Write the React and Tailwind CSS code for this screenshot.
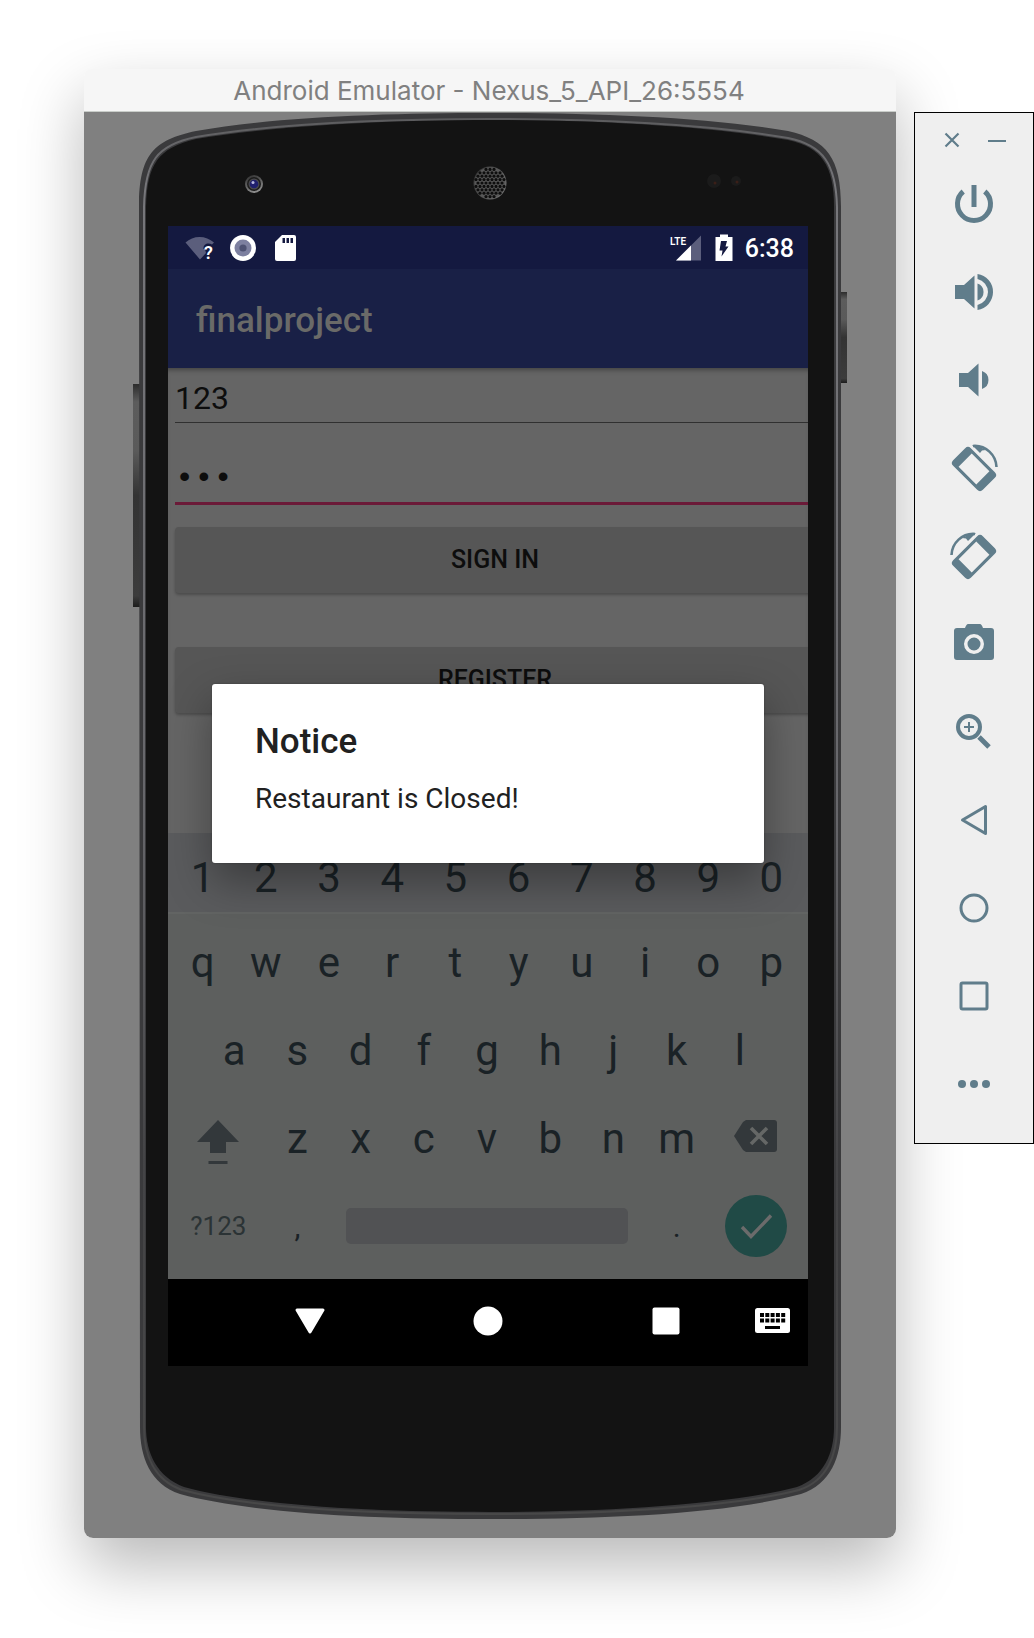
import React from "react";

const roboto = "font-['Roboto','Liberation_Sans',sans-serif]";

function PhoneFrame() {
  const holes = [];
  for (let row = -4; row <= 4; row++) {
    for (let col = -4; col <= 4; col++) {
      const x = col * 4 + (row % 2 ? 2 : 0);
      const y = row * 3.4;
      if (Math.hypot(x, y) < 14.5) holes.push([x, y]);
    }
  }
  return (
    <svg
      className="absolute inset-0 h-full w-full"
      viewBox="0 0 812 1426"
      preserveAspectRatio="none"
      aria-hidden="true"
    >
      <defs>
        <linearGradient id="sideKey" x1="0" y1="0" x2="0" y2="1">
          <stop offset="0" stopColor="#2c2c2c" />
          <stop offset="0.08" stopColor="#5c5c5c" />
          <stop offset="0.3" stopColor="#5a5a5a" />
          <stop offset="0.5" stopColor="#333" />
          <stop offset="0.95" stopColor="#3c3c3c" />
          <stop offset="1" stopColor="#1c1c1c" />
        </linearGradient>
        <linearGradient id="rim" x1="0" y1="0" x2="0" y2="1">
          <stop offset="0" stopColor="#5c5c5e" />
          <stop offset="0.05" stopColor="#77777b" />
          <stop offset="0.5" stopColor="#66666a" />
          <stop offset="0.75" stopColor="#444446" />
          <stop offset="1" stopColor="#484848" />
        </linearGradient>
        <linearGradient id="camera" x1="0" y1="0" x2="0.4" y2="1">
          <stop offset="0" stopColor="#2a2a2a" />
          <stop offset="1" stopColor="#8c8c8c" />
        </linearGradient>
        <linearGradient id="speaker" x1="0" y1="0" x2="1" y2="0.5">
          <stop offset="0" stopColor="#2e2e2e" />
          <stop offset="1" stopColor="#707070" />
        </linearGradient>
      </defs>
      <rect x="49" y="272" width="8" height="223" fill="url(#sideKey)" />
      <rect x="757" y="180" width="6" height="91" fill="url(#sideKey)" />
      <path
        d="M55 95C55 42 70 28 112 19C190 5 300 1 406 1S622 5 704 19C743 28 757 46 757 95V1315C757 1345 747 1372 717 1382C643 1402 520 1407 406 1407S170 1402 96 1382C66 1372 56 1345 56 1315Z"
        fill="#3a3a3c"
      />
      <path
        d="M60 95C61 49 73 33 112 25C190 12 300 7 406 7S622 12 704 26C739 33 752 52 753 95V1315C753 1343 743 1369 715 1378C643 1396 520 1402 406 1402S170 1397 98 1378C70 1368 60 1343 60 1315Z"
        fill="none"
        stroke="url(#rim)"
        strokeWidth="2"
      />
      <path
        d="M62 95C63 52 74 36 112 27C190 14 300 8 406 8S622 14 704 28C737 35 750 53 750 95V1315C750 1341 740 1365 713 1375C643 1393 520 1400 406 1400S170 1394 100 1375C73 1365 62 1341 62 1315Z"
        fill="#131313"
      />
      <circle cx="170" cy="72" r="9" fill="url(#camera)" />
      <circle cx="170" cy="72" r="7" fill="#1c1c1c" />
      <circle cx="170" cy="72" r="5.500" fill="#4a4a4c" />
      <circle cx="170" cy="72" r="4.300" fill="#20206e" />
      <circle cx="169" cy="70.500" r="1.500" fill="#b8b8e0" />
      <circle cx="406" cy="71" r="16.500" fill="url(#speaker)" />
      <circle cx="406" cy="71" r="15.500" fill="#585858" />
      {holes.map(([x, y]) => (
        <circle key={`${x},${y}`} cx={406 + x} cy={71 + y} r="1.600" fill="#0e0e0e" />
      ))}
      <circle cx="630" cy="69" r="7" fill="#1b1b1b" />
      <circle cx="631" cy="71" r="1.500" fill="#3a1f18" />
      <circle cx="652" cy="69" r="5" fill="#1b1b1b" />
      <circle cx="653" cy="70" r="1.500" fill="#3a1f18" />
    </svg>
  );
}

function StatusBar() {
  return (
    <div className="flex h-[43px] items-center justify-between bg-[#141940] pl-4 pr-[14px]">
      <div className="flex items-center gap-4">
        <svg className="h-[30px] w-[30px]" viewBox="0 0 30 30" role="img" aria-label="Wi-Fi without internet">
          <path d="M1.500 9.500C9 2 22 2 30 9.500L28 11.500C24 9 19 11 19.500 16H21L22 20L16 26.500Z" fill="#5b5e7c" />
          <text x="20" y="26" fill="#fff" fontSize="18" fontWeight="600">?</text>
        </svg>
        <svg className="h-[26px] w-[26px]" viewBox="0 0 26 26" role="img" aria-label="Background task">
          <circle cx="13" cy="13" r="13" fill="#fff" />
          <circle cx="13" cy="13" r="8.500" fill="#7d80a0" />
          <circle cx="13" cy="13" r="3.600" fill="#4e5273" />
        </svg>
        <svg className="h-[26px] w-[26px]" viewBox="0 0 26 26" role="img" aria-label="SD card">
          <path d="M10 0H22Q24 0 24 2V24Q24 26 22 26H5Q3 26 3 24V7Z" fill="#fff" />
          <path d="M10.500 3h2.500v5h-2.500zM14.500 3h2.500v5h-2.500zM18.500 3h2.500v5h-2.500z" fill="#141940" />
        </svg>
      </div>
      <div className="flex items-center gap-3">
        <svg className="h-[28px] w-[34px]" viewBox="0 0 34 28" role="img" aria-label="LTE signal">
          <path d="M32 1.500V26.500H7Z" fill="#5b5e7c" />
          <path d="M22 11.500V26.500H7Z" fill="#fff" />
          <text x="1" y="11" fill="#fff" fontSize="10" fontWeight="600">LTE</text>
        </svg>
        <svg className="h-[28px] w-[18px]" viewBox="0 0 18 28" role="img" aria-label="Battery charging">
          <path d="M5 .5H13V3H17.500V27H.5V3H5Z" fill="#fff" />
          <path d="M6 7H12L10.500 12.500H13.500L6.500 22.500L7.500 16.500H4.500Z" fill="#141940" />
        </svg>
        <span className="pt-[2px] text-[25px] font-medium leading-none text-white">6:38</span>
      </div>
    </div>
  );
}

function LoginForm() {
  const button =
    "-mr-[7px] ml-[7px] h-[66px] shrink-0 rounded-[4px] bg-[#565656] text-[25px] font-medium text-[#0d0d0d] shadow-[0_2px_3px_rgba(0,0,0,0.25)]";
  return (
    <form
      className="flex h-[465px] flex-col bg-[#656565] pt-[5px] shadow-[inset_0_5px_5px_-3px_rgba(0,0,0,0.35)]"
      onSubmit={(e) => e.preventDefault()}
    >
      <input
        aria-label="Username"
        type="text"
        defaultValue="123"
        className="ml-[7px] h-[50px] border-b border-[#303030] bg-transparent text-[32px] text-[#0d0d0d] outline-none"
      />
      <input
        aria-label="Password"
        type="password"
        defaultValue="123"
        className="ml-[7px] mt-8 h-[50px] border-b-[3px] border-[#6b1a38] bg-transparent font-['Liberation_Mono',monospace] text-[32px] text-[#0d0d0d] outline-none"
      />
      <div className="mt-[22px] flex flex-col gap-[54px]">
        <button type="submit" className={button}>SIGN IN</button>
        <button type="button" className={button}>REGISTER</button>
      </div>
    </form>
  );
}

function Key({ children }) {
  return (
    <button type="button" className="col-span-2 flex items-center justify-center pt-[2px] text-[42px] leading-none">
      {children}
    </button>
  );
}

function Keyboard() {
  return (
    <div className="text-[#1a2226]">
      <div className="grid h-[79px] grid-cols-[repeat(20,minmax(0,1fr))] bg-[#5a5b5d] pl-[3px] pr-[5px] pt-2">
        {"1234567890".split("").map((k) => <Key key={k}>{k}</Key>)}
      </div>
      <div className="grid grid-cols-[repeat(20,minmax(0,1fr))] auto-rows-[88px] border-t-2 border-[#626463] bg-[#5d5f5e] pb-[9px] pl-[3px] pr-[5px] pt-1">
        {"qwertyuiop".split("").map((k) => <Key key={k}>{k}</Key>)}
        <span />
        {"asdfghjkl".split("").map((k) => <Key key={k}>{k}</Key>)}
        <span />
        <button type="button" aria-label="Shift" className="col-span-3 flex items-center justify-center">
          <svg className="h-14 w-14" viewBox="-28 -28 56 56" fill="#33383b">
            <path d="M0-18L21 4H8V15H-8V4H-21Z" />
            <path d="M-9.500 23H9.500V26H-9.500Z" />
          </svg>
        </button>
        {"zxcvbnm".split("").map((k) => <Key key={k}>{k}</Key>)}
        <button type="button" aria-label="Backspace" className="col-span-3 flex items-center justify-center">
          <svg className="h-12 w-12" viewBox="-24 -24 48 48">
            <path d="M-10-18H18Q21-18 21-15V11Q21 14 18 14H-10L-13 12L-22-2L-13-16Z" fill="#33383b" />
            <path d="M-5-10L11 6M11-10L-5 6" stroke="#656766" strokeWidth="3.600" />
          </svg>
        </button>
        <button type="button" className="col-span-3 text-[26px] text-[#2b3335]">?123</button>
        <button type="button" className="col-span-2 text-[30px]">,</button>
        <button type="button" aria-label="Space" className="col-span-10 mx-[17px] h-9 self-center rounded-[5px] bg-[#515254]" />
        <button type="button" className="col-span-2 text-[30px]">.</button>
        <button type="button" aria-label="Done" className="col-span-3 flex items-center justify-center">
          <svg className="h-[62px] w-[62px]" viewBox="-31 -31 62 62">
            <circle r="31" fill="#204a46" />
            <path d="M-14 1L-5 10.500L15-10.500" fill="none" stroke="#6b6b6b" strokeWidth="3.400" />
          </svg>
        </button>
      </div>
    </div>
  );
}

function NavBar() {
  const cell = "flex flex-1 items-center justify-center";
  return (
    <div className="flex h-[87px] items-center bg-black pb-[3px] pl-[53px] pr-[18px]">
      <button type="button" aria-label="Hide keyboard" className={cell}>
        <svg className="h-8 w-8" viewBox="-16 -16 32 32">
          <path d="M-13-11H13L0 11Z" fill="#fff" stroke="#fff" strokeWidth="3" strokeLinejoin="round" />
        </svg>
      </button>
      <button type="button" aria-label="Home" className={cell}>
        <svg className="h-8 w-8" viewBox="-16 -16 32 32"><circle r="14.500" fill="#fff" /></svg>
      </button>
      <button type="button" aria-label="Overview" className={cell}>
        <svg className="h-8 w-8" viewBox="-16 -16 32 32"><rect x="-13.500" y="-13.500" width="27" height="27" rx="2" fill="#fff" /></svg>
      </button>
      <button type="button" aria-label="Switch input method">
        <svg className="h-[26px] w-[35px]" viewBox="0 0 35 26">
          <rect width="35" height="25" rx="2.500" fill="#fff" />
          {[0, 1, 2, 3, 4].map((i) => (
            <g key={i}>
              <rect x={5 + i * 5.3} y="5" width="4" height="4" />
              <rect x={5 + i * 5.3} y="10.500" width="4" height="4" />
            </g>
          ))}
          <rect x="10" y="18" width="15" height="3" />
        </svg>
      </button>
    </div>
  );
}

function NoticeDialog() {
  return (
    <div
      role="dialog"
      aria-labelledby="notice-title"
      className="absolute inset-x-11 top-[458px] h-[179px] rounded-[3px] bg-white px-[43px] pt-[37px] text-[#212121] shadow-[0_18px_44px_rgba(0,0,0,0.35),0_0_2px_rgba(0,0,0,0.3)]"
    >
      <h2 id="notice-title" className="text-[35px] font-medium leading-[42px]">Notice</h2>
      <p className="mt-4 text-[28px] leading-10">Restaurant is Closed!</p>
    </div>
  );
}

function EmulatorWindow() {
  return (
    <main className="min-w-0 flex-1 overflow-clip rounded-t-[8px] rounded-b-[9px]">
      <header className="flex h-[43px] items-center justify-center border-b border-[#c9cdc9] bg-[#f6f6f6] pr-[2px] pt-[2px]">
        <h1 className="whitespace-nowrap font-['Inter',sans-serif] text-[26px] leading-none text-[#808080]">
          Android Emulator - Nexus_5_API_26:5554
        </h1>
      </header>
      <div className="relative bg-[#808080] pb-[172px] pl-[84px] pr-[88px] pt-[114px]">
        <PhoneFrame />
        <div className={`relative overflow-hidden ${roboto}`}>
          <StatusBar />
          <div className="flex h-[99px] items-center bg-[#192046] pl-7 pt-1">
            <h2 className="text-[35px] font-medium leading-none text-[#6a6a68]">finalproject</h2>
          </div>
          <LoginForm />
          <Keyboard />
          <NavBar />
          <NoticeDialog />
        </div>
      </div>
    </main>
  );
}

const rotateDevice = (
  <>
    <path
      fillRule="evenodd"
      transform="translate(0 1) rotate(45)"
      d="M-17-12.500H17Q21-12.500 21-8.500V8.500Q21 12.500 17 12.500H-17Q-21 12.500-21 8.500V-8.500Q-21-12.500-17-12.500ZM-12.500-9.300V9.300H12.500V-9.300Z"
    />
    <path d="M-1-22C12-23 22-13 22.500-1" fill="none" stroke="currentColor" strokeWidth="2.600" />
    <path d="M-2-23L6-15L8-17.500L12-18L4-22Z" />
  </>
);

const tools = [
  {
    label: "Power",
    icon: (
      <g fill="none" stroke="currentColor" strokeWidth="5">
        <path d="M0-19V3M-10.800-12.500A16.500 16.500 0 1 0 10.800-12.500" />
      </g>
    ),
  },
  {
    label: "Volume up",
    icon: (
      <>
        <path d="M-19-7H-10L.5-16.500V16.500L-10 7H-19ZM3.500-8.500A9 9 0 0 1 3.500 8.500Z" />
        <path d="M3.500-18A18.200 18.200 0 0 1 3.500 18V13A13.300 13.300 0 0 0 3.500-13Z" />
      </>
    ),
  },
  {
    label: "Volume down",
    icon: <path d="M-15-7H-6L4.500-16.500V16.500L-6 7H-15ZM8-9A9.500 9.500 0 0 1 8 9Z" />,
  },
  { label: "Rotate left", icon: rotateDevice },
  { label: "Rotate right", icon: <g transform="scale(-1 1)">{rotateDevice}</g> },
  {
    label: "Take screenshot",
    icon: (
      <path
        fillRule="evenodd"
        d="M-6-20H6Q7.500-20 9-16H17Q20-16 20-13V13Q20 16 17 16H-17Q-20 16-20 13V-13Q-20-16-17-16H-9Q-7.500-20-6-20ZM0-10A10 10 0 1 0 0 10A10 10 0 1 0 0-10ZM0-6.500A6.500 6.500 0 1 1 0 6.500A6.500 6.500 0 1 1 0-6.500Z"
      />
    ),
  },
  {
    label: "Zoom",
    icon: (
      <g fill="none" stroke="currentColor">
        <circle cx="-5" cy="-5" r="11" strokeWidth="4" />
        <path d="M-10-5H0M-5-10V0" strokeWidth="2" />
        <path d="M5 5L15 15" strokeWidth="5" />
      </g>
    ),
  },
  {
    label: "Back",
    icon: <path d="M-11.500 0L11.500-13.500V13.500Z" fill="none" stroke="currentColor" strokeWidth="3" strokeLinejoin="round" />,
  },
  { label: "Home", icon: <circle r="13" fill="none" stroke="currentColor" strokeWidth="3" /> },
  {
    label: "Overview",
    icon: <rect x="-13" y="-13" width="26" height="26" rx="1.500" fill="none" stroke="currentColor" strokeWidth="3" />,
  },
  {
    label: "More",
    icon: (
      <>
        <circle cx="-12" r="4" />
        <circle r="4" />
        <circle cx="12" r="4" />
      </>
    ),
  },
];

function Toolbar() {
  return (
    <aside className="mt-[43px] w-[120px] shrink-0 border border-black bg-[#efefef] pb-[15px] text-[#607d8b]">
      <div className="flex h-[47px] items-center justify-center gap-[21px] pt-[6px]">
        <button type="button" aria-label="Close">
          <svg className="h-6 w-6" viewBox="-12 -12 24 24" stroke="currentColor" strokeWidth="2.200">
            <path d="M-6.500-6.500L6.500 6.500M6.500-6.500L-6.500 6.500" />
          </svg>
        </button>
        <button type="button" aria-label="Minimize">
          <svg className="h-6 w-6" viewBox="-12 -12 24 24" stroke="currentColor" strokeWidth="2">
            <path d="M-9 1H9" />
          </svg>
        </button>
      </div>
      {tools.map(({ label, icon }) => (
        <button key={label} type="button" aria-label={label} className="flex h-[88px] w-full items-center justify-center">
          <svg className="h-12 w-12" viewBox="-24 -24 48 48" fill="currentColor">{icon}</svg>
        </button>
      ))}
    </aside>
  );
}

export default function App() {
  return (
    <div className="flex min-h-screen items-start gap-[18px] bg-white pb-[100px] pl-[84px] pt-[69px]">
      <div className="flex min-w-0 flex-1 rounded-[9px] shadow-[0_28px_64px_rgba(0,0,0,0.28)]">
        <EmulatorWindow />
      </div>
      <Toolbar />
    </div>
  );
}
